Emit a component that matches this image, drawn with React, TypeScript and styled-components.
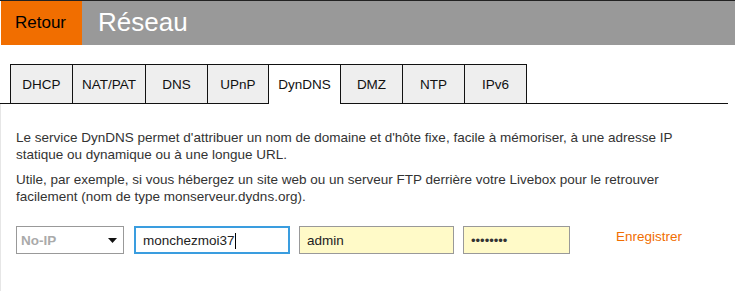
import React from 'react';
import styled, { createGlobalStyle } from 'styled-components';

const GlobalStyle = createGlobalStyle`
  body {
    margin: 0;
    background: #fff;
    font-family: 'Liberation Sans', Arial, sans-serif;
    font-size: 13px;
    color: #333;
  }
`;

const TABS = [
  { label: 'DHCP', width: 62 },
  { label: 'NAT/PAT', width: 73 },
  { label: 'DNS', width: 62 },
  { label: 'UPnP', width: 61 },
  { label: 'DynDNS', width: 72 },
  { label: 'DMZ', width: 62 },
  { label: 'NTP', width: 62 },
  { label: 'IPv6', width: 62 },
];

const App = () => {
  const active = 'DynDNS';

  return (
    <Page>
      <GlobalStyle />
      <Header>
        <BackButton>Retour</BackButton>
        <Title>Réseau</Title>
      </Header>

      <TabBar>
        {TABS.map((t, i) => (
          <Tab key={t.label} $w={t.width} $active={t.label === active} $last={i === TABS.length - 1}>
            {t.label}
          </Tab>
        ))}
      </TabBar>

      <Panel>
        <Text>
          Le service DynDNS permet d'attribuer un nom de domaine et d'hôte fixe, facile à mémoriser, à une
          adresse IP statique ou dynamique ou à une longue URL.
        </Text>
        <Text>
          Utile, par exemple, si vous hébergez un site web ou un serveur FTP derrière votre Livebox pour le
          retrouver facilement (nom de type monserveur.dydns.org).
        </Text>

        <FormRow>
          <Select>
            <SelectValue>No-IP</SelectValue>
            <svg width="9" height="5" viewBox="0 0 9 5">
              <path d="M0 0 L9 0 L4.5 5 Z" fill="#111" />
            </svg>
          </Select>
          <Field $w={156} $focused>
            monchezmoi37
            <Caret />
          </Field>
          <Field $w={155} $filled>
            admin
          </Field>
          <Field $w={107} $filled>
            <Dots>••••••••</Dots>
          </Field>
          <SaveLink>Enregistrer</SaveLink>
        </FormRow>
      </Panel>
    </Page>
  );
};

export default App;

const Page = styled.div`
  width: 735px;
  height: 291px;
  overflow: hidden;
`;

const Header = styled.header`
  display: flex;
  height: 44px;
  border-top: 1px solid #222;
`;

const BackButton = styled.div`
  width: 81px;
  margin-left: 1px;
  background: #f16e00;
  color: #000;
  font-size: 17px;
  display: flex;
  align-items: center;
  padding-left: 14px;
  box-sizing: border-box;
`;

const Title = styled.div`
  flex: 1;
  background: #999;
  color: #fff;
  font-size: 26px;
  display: flex;
  align-items: center;
  padding-left: 16px;
  padding-bottom: 2px;
`;

const TabBar = styled.nav`
  display: flex;
  width: 728px;
  margin-top: 19px;
  padding-left: 10px;
  box-sizing: border-box;
  border-bottom: 1px solid #111;
`;

const Tab = styled.div<{ $w: number; $active?: boolean; $last?: boolean }>`
  width: ${(p) => p.$w + (p.$last ? 1 : 0)}px;
  box-sizing: border-box;
  border-top: 1px solid #111;
  border-left: 1px solid #111;
  border-right: ${(p) => (p.$last ? '1px solid #111' : 'none')};
  background: ${(p) => (p.$active ? '#fff' : '#eee')};
  margin-bottom: ${(p) => (p.$active ? '-1px' : '0')};
  height: ${(p) => (p.$active ? '40px' : '39px')};
  padding-bottom: ${(p) => (p.$active ? '1px' : '0')};
  color: #111;
  font-size: 13.5px;
  display: flex;
  align-items: center;
  justify-content: center;
`;

const Panel = styled.section`
  width: 728px;
  height: 187px;
  box-sizing: border-box;
  border-left: 1px solid #e6e6e6;
  padding: 25px 15px 0 15px;
`;

const Text = styled.p`
  margin: 0 0 8px 0;
  line-height: 17px;
  font-size: 13.5px;
  color: #333;
`;

const FormRow = styled.div`
  display: flex;
  align-items: flex-start;
  margin-top: 21px;
`;

const Select = styled.div`
  width: 108px;
  height: 28px;
  box-sizing: border-box;
  border: 1px solid #999;
  display: flex;
  align-items: center;
  justify-content: space-between;
  padding: 0 6px 0 4px;
  margin-right: 10px;
`;

const SelectValue = styled.span`
  color: #aaa;
  font-weight: bold;
  font-size: 13.5px;
`;

const Field = styled.div<{ $w: number; $focused?: boolean; $filled?: boolean }>`
  width: ${(p) => p.$w}px;
  height: 28px;
  box-sizing: border-box;
  border: ${(p) => (p.$focused ? '2px solid #3a9ddf' : '1px solid #999')};
  background: ${(p) => (p.$filled ? '#fffac8' : '#fff')};
  padding-left: 7px;
  display: flex;
  align-items: center;
  color: #222;
  font-size: 13.5px;
  margin-right: 9px;
  padding-top: 1px;
`;

const Caret = styled.span`
  display: inline-block;
  width: 1px;
  height: 16px;
  background: #000;
`;

const Dots = styled.span`
  font-size: 13px;
  color: #333;
`;

const SaveLink = styled.a`
  color: #f16e00;
  font-size: 13.5px;
  margin-left: 37px;
  margin-top: 3px;
  cursor: pointer;
`;
